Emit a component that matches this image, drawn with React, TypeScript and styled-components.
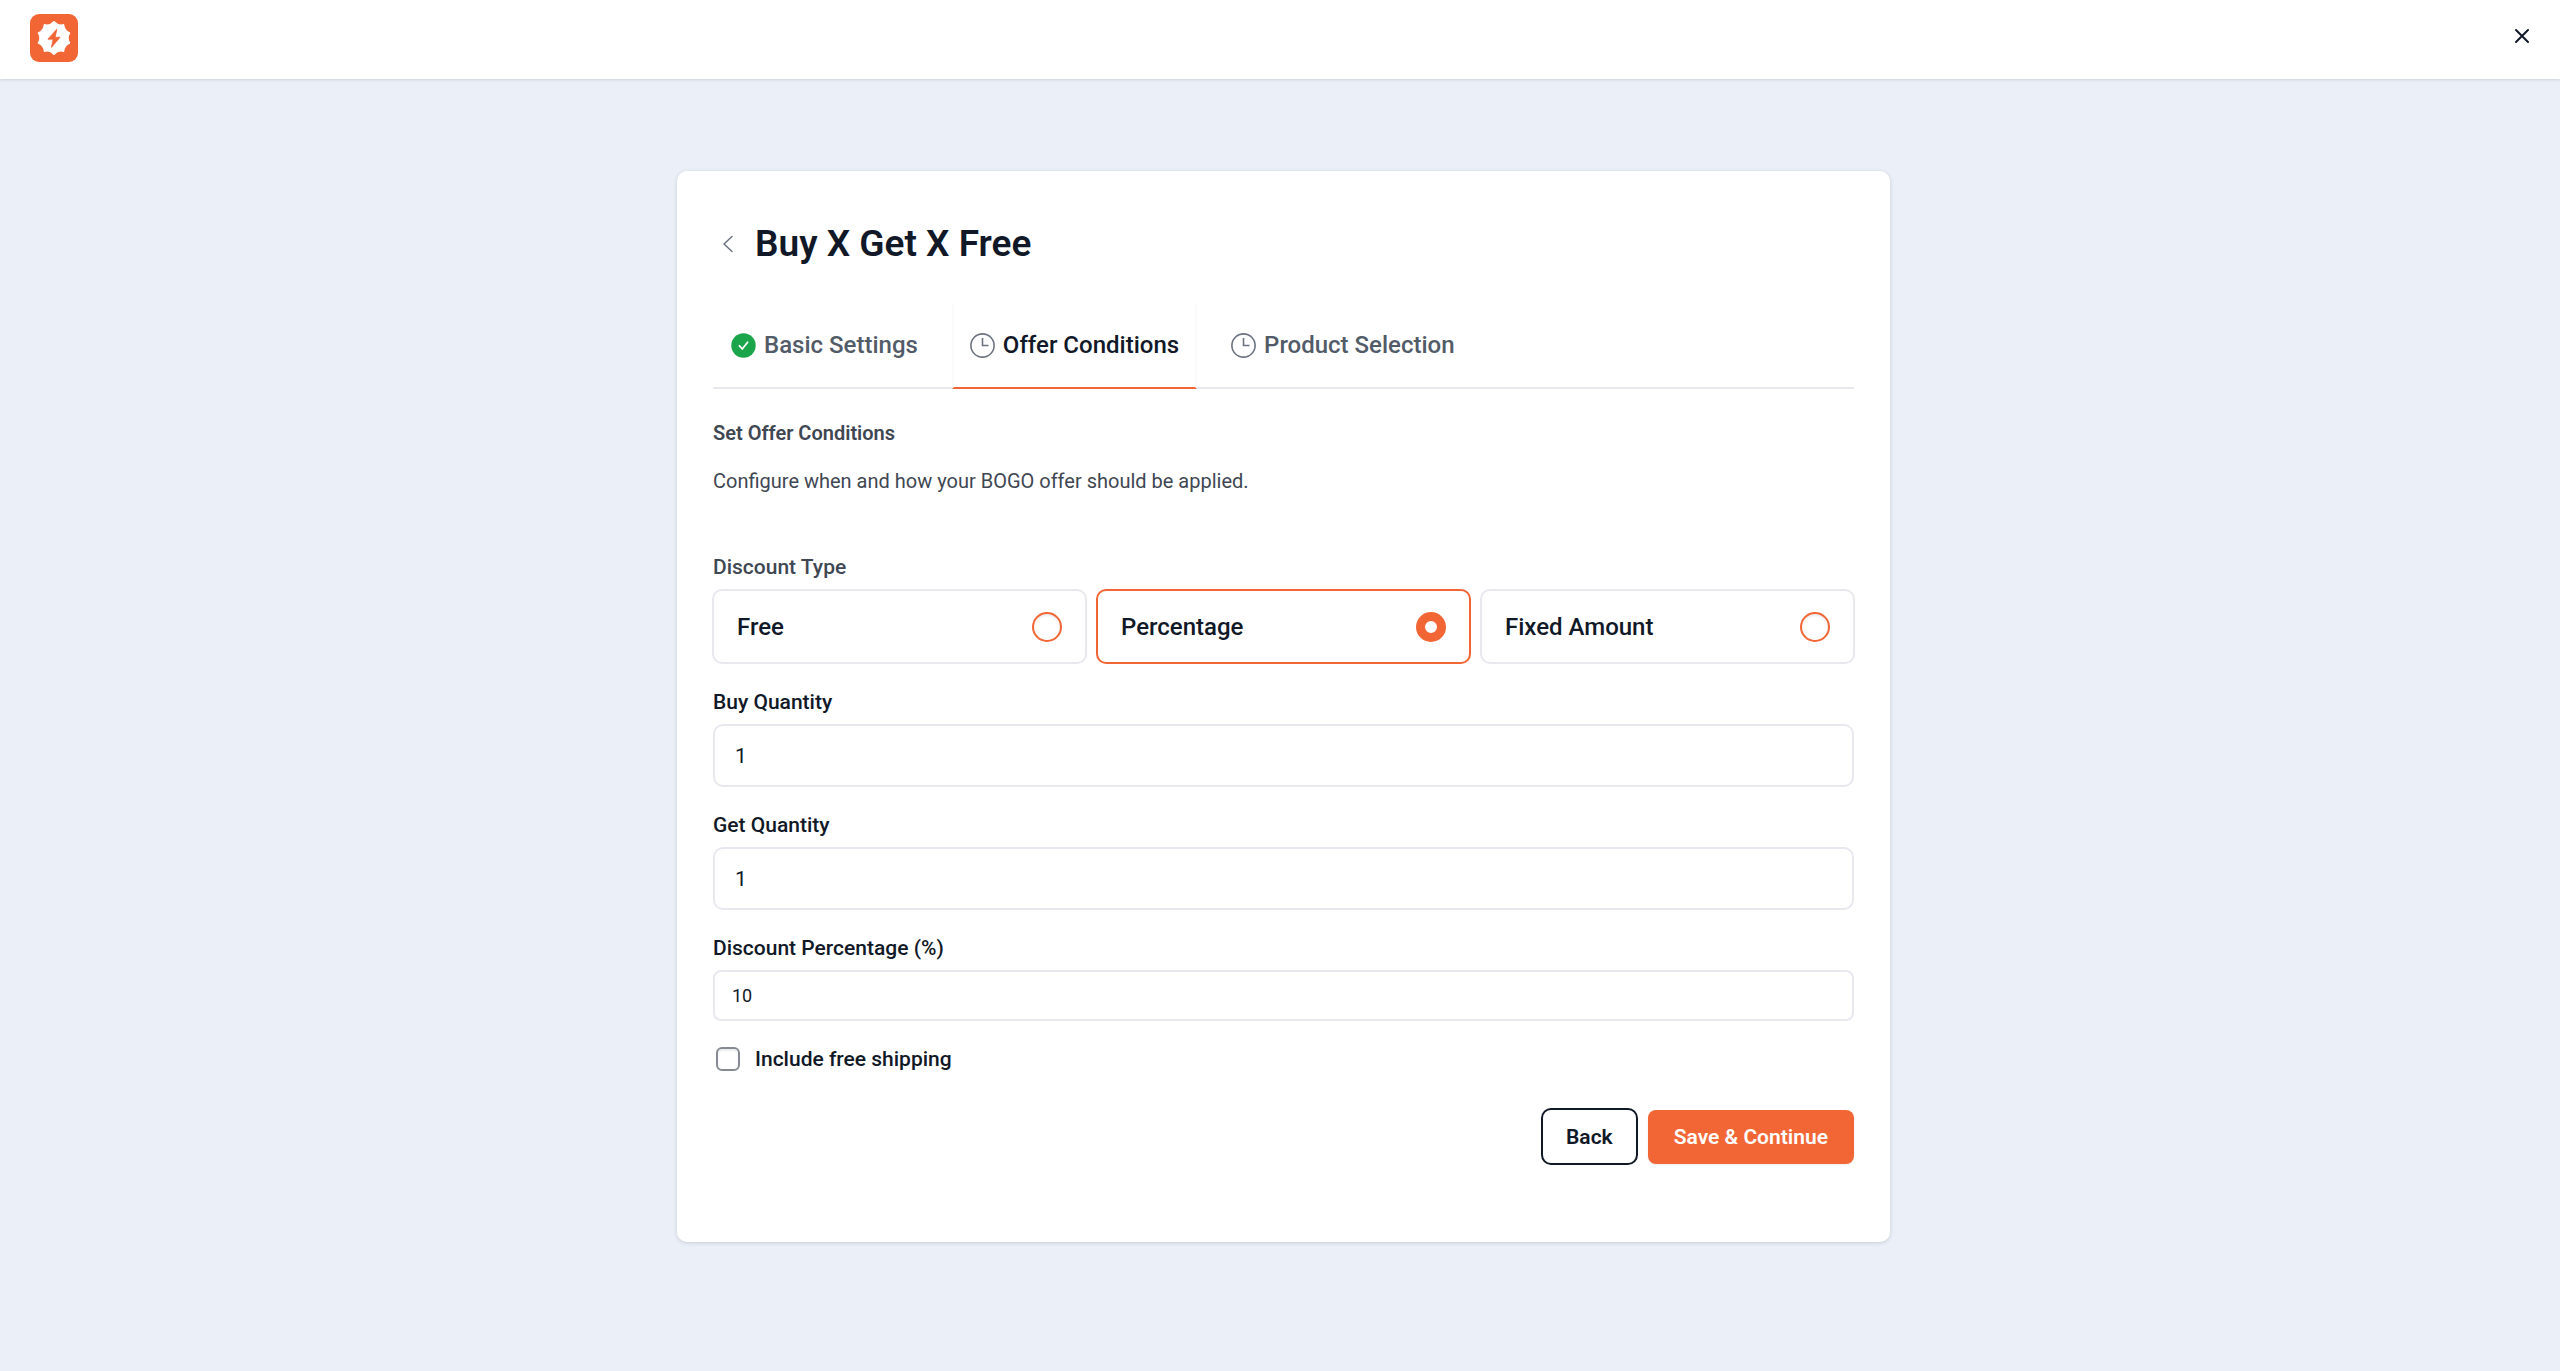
import React, { useState } from 'react';
import styled, { createGlobalStyle } from 'styled-components';

const color = {
  accent: '#f26534',
  ink: '#111827',
  body: '#3f4753',
  muted: '#525b68',
  icon: '#6b7280',
  line: '#e8e9f0',
  page: '#ebf0f8',
};

const GlobalStyle = createGlobalStyle`
  *, *::before, *::after { box-sizing: border-box; }
  body {
    margin: 0;
    background: ${color.page};
    color: ${color.ink};
    font-family: Roboto, "Liberation Sans", sans-serif;
  }
  h1, h2, p { margin: 0; }
  button, input { font: inherit; color: inherit; }
`;

const Page = styled.div`
  display: flex;
  flex-direction: column;
  min-height: 100vh;
`;

const TopBar = styled.header`
  display: flex;
  align-items: flex-start;
  justify-content: space-between;
  height: 79px;
  padding: 14px 16px 0 30px;
  background: #fff;
  box-shadow: 0 1px 3px rgba(17, 24, 39, 0.14);
`;

const IconButton = styled.button<{ $size: number }>`
  display: flex;
  align-items: center;
  justify-content: center;
  width: ${p => p.$size}px;
  height: ${p => p.$size}px;
  padding: 0;
  border: 0;
  background: none;
  cursor: pointer;
`;

const Main = styled.main`
  display: flex;
  justify-content: center;
  padding: 92px 16px 92px 23px;
`;

const Card = styled.section`
  width: 100%;
  max-width: 1213px;
  padding: 48px 36px 77px;
  border-radius: 10px;
  background: #fff;
  box-shadow: 0 1px 4px rgba(17, 24, 39, 0.16);
`;

const TitleRow = styled.div`
  display: flex;
  align-items: center;
  gap: 12px;
  height: 50px;
`;

const Title = styled.h1`
  font-size: 37px;
  line-height: 48px;
  font-weight: 600;
`;

const Tabs = styled.nav`
  display: flex;
  gap: 16px;
  height: 86px;
  margin-top: 34px;
  box-shadow: inset 0 -2px 0 ${color.line};
`;

const Tab = styled.button<{ $active?: boolean }>`
  display: flex;
  align-items: center;
  gap: 8px;
  padding: 0 16px;
  border: solid transparent;
  border-width: 0 2px 2px;
  border-color: transparent ${p => (p.$active ? '#fafafb' : 'transparent')};
  border-bottom-color: ${p => (p.$active ? color.accent : 'transparent')};
  background: none;
  color: ${p => (p.$active ? color.ink : color.muted)};
  font-size: 24px;
  line-height: 32px;
  font-weight: 500;
  white-space: nowrap;
  cursor: pointer;
`;

const SectionTitle = styled.h2`
  margin-top: 30px;
  color: ${color.body};
  font-size: 20px;
  line-height: 28px;
  font-weight: 600;
`;

const Description = styled.p`
  margin-top: 20px;
  color: ${color.body};
  font-size: 20px;
  line-height: 28px;
`;

const Form = styled.form`
  display: flex;
  flex-direction: column;
  gap: 24px;
  margin-top: 58px;
`;

const Field = styled.div`
  display: flex;
  flex-direction: column;
  gap: 8px;
`;

const Label = styled.label<{ $soft?: boolean }>`
  color: ${p => (p.$soft ? color.body : color.ink)};
  font-size: 21px;
  line-height: 28px;
  font-weight: 500;
`;

const Options = styled.div`
  display: grid;
  grid-template-columns: repeat(3, 1fr);
  gap: 9px;
  margin: 0 -1px;
`;

const Option = styled.label<{ $selected: boolean }>`
  display: flex;
  align-items: center;
  justify-content: space-between;
  height: 75px;
  padding: 0 23px;
  border: 2px solid ${p => (p.$selected ? color.accent : color.line)};
  border-radius: 10px;
  font-size: 24px;
  line-height: 32px;
  font-weight: 500;
  cursor: pointer;
`;

const Radio = styled.input`
  appearance: none;
  width: 30px;
  height: 30px;
  margin: 0;
  border: 2px solid ${color.accent};
  border-radius: 50%;
  box-shadow: inset 0 2px 2px rgba(17, 24, 39, 0.08);
  &:checked {
    border-width: 9px;
    box-shadow: none;
  }
`;

const TextInput = styled.input<{ $compact?: boolean }>`
  appearance: textfield;
  width: 100%;
  height: ${p => (p.$compact ? 51 : 63)}px;
  padding: 0 ${p => (p.$compact ? 17 : 20)}px;
  border: 2px solid ${color.line};
  border-radius: ${p => (p.$compact ? 8 : 10)}px;
  background: #fff;
  font-size: ${p => (p.$compact ? 18 : 21)}px;
  outline: none;
  &::-webkit-inner-spin-button { appearance: none; }
`;

const CheckRow = styled.div`
  display: flex;
  align-items: center;
  gap: 15px;
  padding-left: 3px;
`;

const Checkbox = styled.input`
  appearance: none;
  width: 24px;
  height: 24px;
  margin: 0;
  border: 2px solid #858a93;
  border-radius: 6px;
  box-shadow: inset 0 2px 2px rgba(17, 24, 39, 0.08);
  &:checked { background: ${color.accent}; }
`;

const Actions = styled.div`
  display: flex;
  align-items: center;
  justify-content: flex-end;
  gap: 10px;
  margin-top: 11px;
`;

const Button = styled.button<{ $primary?: boolean }>`
  height: ${p => (p.$primary ? 54 : 57)}px;
  padding: 0 ${p => (p.$primary ? 26 : 23)}px;
  border: ${p => (p.$primary ? '0' : `2px solid ${color.ink}`)};
  border-radius: ${p => (p.$primary ? 8 : 10)}px;
  background: ${p => (p.$primary ? color.accent : '#fff')};
  box-shadow: ${p => (p.$primary ? '0 1px 2px rgba(17, 24, 39, 0.08)' : 'none')};
  color: ${p => (p.$primary ? '#fff' : color.ink)};
  font-size: 21px;
  line-height: 28px;
  font-weight: 600;
  cursor: pointer;
`;

const badgePath = (() => {
  const at = (deg: number, r: number) => {
    const a = (deg * Math.PI) / 180;
    return `${(24 + r * Math.sin(a)).toFixed(2)} ${(24 - r * Math.cos(a)).toFixed(2)}`;
  };
  let d = `M${at(0, 16.2)}`;
  for (let i = 0; i < 10; i += 1) {
    d += `Q${at(i * 36 + 18, 12.4)} ${at(i * 36 + 36, 16.2)}`;
  }
  return `${d}Z`;
})();

const Logo = () => (
  <svg width="48" height="48" viewBox="0 0 48 48" role="img" aria-label="Logo">
    <rect width="48" height="48" rx="9" fill={color.accent} />
    <path d={badgePath} fill="#fff" stroke="#fff" strokeWidth="1.6" strokeLinejoin="round" />
    <path
      d="M26.8 15.2 17.9 25.2H23.2L21.4 33.4 30.1 23.3H25.1Z"
      fill={color.accent}
      stroke={color.accent}
      strokeWidth="0.8"
      strokeLinejoin="round"
    />
  </svg>
);

const CloseIcon = () => (
  <svg width="16" height="16" viewBox="0 0 16 16" fill="none" stroke={color.ink} strokeWidth="2" strokeLinecap="round" aria-hidden>
    <path d="M2 2 14 14M14 2 2 14" />
  </svg>
);

const ChevronIcon = () => (
  <svg width="12" height="18" viewBox="0 0 12 18" fill="none" stroke={color.icon} strokeWidth="1.5" strokeLinecap="round" strokeLinejoin="round" aria-hidden>
    <path d="M10 1.5 2 9 10 16.5" />
  </svg>
);

const ClockIcon = () => (
  <svg width="25" height="25" viewBox="0 0 25 25" fill="none" stroke={color.icon} strokeWidth="1.6" aria-hidden>
    <circle cx="12.5" cy="12.5" r="11.6" />
    <path d="M12.5 5V12.5H18.5" />
  </svg>
);

const DoneIcon = () => (
  <svg width="25" height="25" viewBox="0 0 25 25" fill="none" aria-hidden>
    <circle cx="12.5" cy="12.5" r="12.2" fill="#1ba54a" />
    <path d="M8.5 12.8 11.3 16 16.6 9.3" stroke="#fff" strokeWidth="1.8" strokeLinecap="round" strokeLinejoin="round" />
  </svg>
);

const discountTypes = ['Free', 'Percentage', 'Fixed Amount'];

export default function App() {
  const [type, setType] = useState('Percentage');

  return (
    <>
      <GlobalStyle />
      <Page>
        <TopBar>
          <Logo />
          <IconButton type="button" aria-label="Close" $size={44}>
            <CloseIcon />
          </IconButton>
        </TopBar>
        <Main>
          <Card>
            <TitleRow>
              <IconButton type="button" aria-label="Go back" $size={30}>
                <ChevronIcon />
              </IconButton>
              <Title>Buy X Get X Free</Title>
            </TitleRow>
            <Tabs>
              <Tab type="button">
                <DoneIcon />
                Basic Settings
              </Tab>
              <Tab type="button" $active aria-current="step">
                <ClockIcon />
                Offer Conditions
              </Tab>
              <Tab type="button">
                <ClockIcon />
                Product Selection
              </Tab>
            </Tabs>
            <SectionTitle>Set Offer Conditions</SectionTitle>
            <Description>Configure when and how your BOGO offer should be applied.</Description>
            <Form onSubmit={e => e.preventDefault()}>
              <Field role="radiogroup" aria-labelledby="discount-type">
                <Label as="span" id="discount-type" $soft>
                  Discount Type
                </Label>
                <Options>
                  {discountTypes.map(name => (
                    <Option key={name} $selected={type === name}>
                      {name}
                      <Radio type="radio" name="discountType" value={name} checked={type === name} onChange={() => setType(name)} />
                    </Option>
                  ))}
                </Options>
              </Field>
              <Field>
                <Label htmlFor="buy-quantity">Buy Quantity</Label>
                <TextInput id="buy-quantity" type="number" defaultValue="1" />
              </Field>
              <Field>
                <Label htmlFor="get-quantity">Get Quantity</Label>
                <TextInput id="get-quantity" type="number" defaultValue="1" />
              </Field>
              <Field>
                <Label htmlFor="discount-value">Discount Percentage (%)</Label>
                <TextInput id="discount-value" type="number" defaultValue="10" $compact />
              </Field>
              <CheckRow>
                <Checkbox id="free-shipping" type="checkbox" />
                <Label htmlFor="free-shipping">Include free shipping</Label>
              </CheckRow>
              <Actions>
                <Button type="button">Back</Button>
                <Button type="submit" $primary>
                  Save &amp; Continue
                </Button>
              </Actions>
            </Form>
          </Card>
        </Main>
      </Page>
    </>
  );
}
